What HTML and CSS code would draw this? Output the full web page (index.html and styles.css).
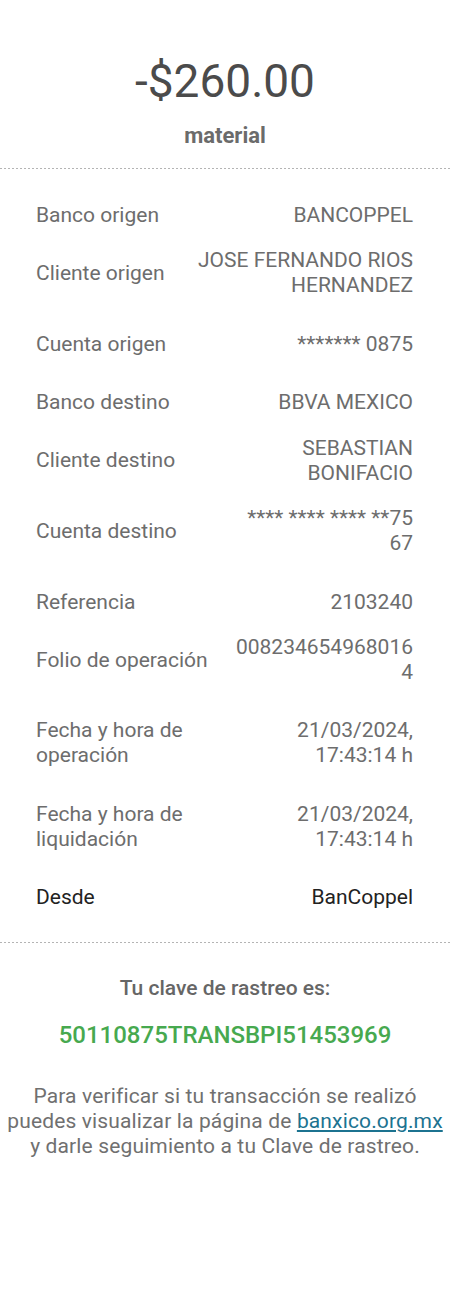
FILE: index.html
```html
<!DOCTYPE html>
<html lang="es">
<head>
<meta charset="utf-8">
<title>Comprobante</title>
<link rel="stylesheet" href="styles.css">
</head>
<body>
<main class="receipt">
  <section class="summary">
    <div class="amount">-$260.00</div>
    <div class="concept">material</div>
  </section>
  <div class="divider"></div>
  <section class="details">
    <div class="row"><span class="label">Banco origen</span><span class="value">BANCOPPEL</span></div>
    <div class="row row--tall"><span class="label">Cliente origen</span><span class="value">JOSE FERNANDO RIOS<br>HERNANDEZ</span></div>
    <div class="row"><span class="label">Cuenta origen</span><span class="value">******* 0875</span></div>
    <div class="row"><span class="label">Banco destino</span><span class="value">BBVA MEXICO</span></div>
    <div class="row row--tall"><span class="label">Cliente destino</span><span class="value">SEBASTIAN<br>BONIFACIO</span></div>
    <div class="row row--tall"><span class="label">Cuenta destino</span><span class="value">**** **** **** **75<br>67</span></div>
    <div class="row"><span class="label">Referencia</span><span class="value">2103240</span></div>
    <div class="row row--tall"><span class="label">Folio de operación</span><span class="value">008234654968016<br>4</span></div>
    <div class="row"><span class="label">Fecha y hora de<br>operación</span><span class="value">21/03/2024,<br>17:43:14 h</span></div>
    <div class="row"><span class="label">Fecha y hora de<br>liquidación</span><span class="value">21/03/2024,<br>17:43:14 h</span></div>
    <div class="row row--strong"><span class="label">Desde</span><span class="value">BanCoppel</span></div>
  </section>
  <div class="divider"></div>
  <section class="tracking">
    <div class="tracking-title">Tu clave de rastreo es:</div>
    <div class="tracking-code">50110875TRANSBPI51453969</div>
    <p class="tracking-note">Para verificar si tu transacción se realizó<br>puedes visualizar la página de <a class="link" href="#">banxico.org.mx</a><br>y darle seguimiento a tu Clave de rastreo.</p>
  </section>
</main>
</body>
</html>
```
FILE: styles.css
```css
html, body {
  margin: 0;
  padding: 0;
  background: #ffffff;
}

body {
  font-family: Roboto, "Noto Sans", "Liberation Sans", sans-serif;
  color: #6d6d6d;
  width: 450px;
  height: 1294px;
}

.receipt {
  display: flex;
  flex-direction: column;
}

.summary {
  padding: 53px 0 19px;
  text-align: center;
}

.amount {
  font-size: 46px;
  line-height: 56px;
  color: #4b4b4b;
}

.concept {
  margin-top: 14px;
  font-size: 22px;
  line-height: 26px;
  font-weight: 700;
  color: #6b6b6b;
}

.divider {
  height: 1px;
  background: repeating-linear-gradient(to right, #b4b4b4 0 2px, transparent 2px 4px);
}

.details {
  display: flex;
  flex-direction: column;
  padding: 17px 37px 16px 36px;
}

.row {
  display: flex;
  justify-content: space-between;
  align-items: center;
  gap: 16px;
  padding: 16.6px 0;
  font-size: 21px;
  line-height: 25px;
}

.row--tall {
  padding-top: 4.2px;
}

.label,
.value {
  white-space: nowrap;
}

.value {
  text-align: right;
}

.row--strong {
  color: #222222;
}

.tracking {
  padding: 33px 0 0;
  text-align: center;
}

.tracking-title {
  font-size: 21px;
  line-height: 25px;
  font-weight: 500;
  color: #666666;
}

.tracking-code {
  margin-top: 20px;
  font-size: 24px;
  line-height: 28px;
  font-weight: 500;
  color: #47a94f;
}

.tracking-note {
  margin: 35px 0 0;
  font-size: 21px;
  line-height: 24.6px;
  letter-spacing: 0.14px;
  color: #707070;
}

.link {
  color: #1c7390;
  text-decoration: underline;
}
```
